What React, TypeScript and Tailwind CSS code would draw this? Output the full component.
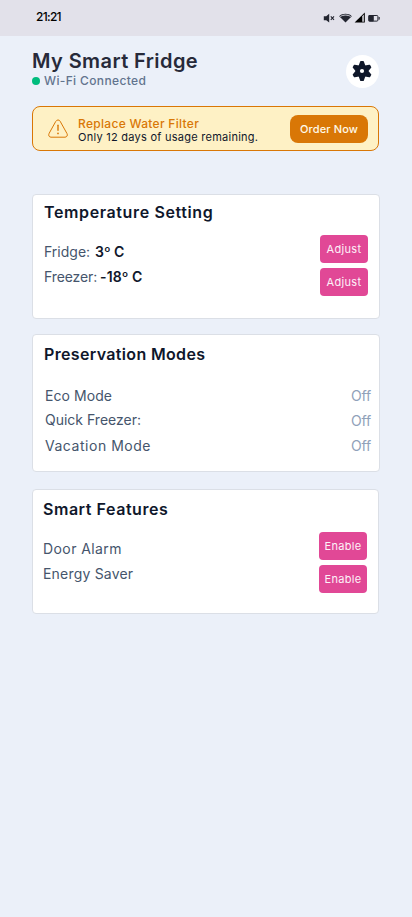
import type { ReactNode } from 'react';

interface CardProps {
    title: string;
    titleClass: string;
    className: string;
    children: ReactNode;
}

function Card({ title, titleClass, className, children }: CardProps) {
    return (
        <section className={`bg-white border border-[#dbdfe6] rounded ${className}`}>
            <h2 className={`text-base leading-6 font-semibold text-slate-900 ${titleClass}`}>{title}</h2>
            {children}
        </section>
    );
}

function ActionButton({ label }: { label: string }) {
    return (
        <button className="w-12 h-7 pt-0.5 rounded bg-[#e14896] text-[11px] tracking-[0.33px] text-pink-50 whitespace-nowrap">
            {label}
        </button>
    );
}

function StatusBar() {
    return (
        <header className="h-9 bg-[#e2e1ea] flex items-center justify-between pl-9 pr-8">
            <span className="text-[12px] leading-4 font-medium text-black -tracking-[0.7px] -mt-[3px]">21:21</span>
            <svg className="w-[58px] h-3" viewBox="0 0 58 12" fill="#232530">
                {/* muted speaker */}
                <path d="M1.8 4.200h2.4L7.2 1.800v8.800L4.2 8.200H1.8z" />
                <path d="M8.800 4.400l3.200 3.400M12 4.400L8.800 7.800" stroke="#232530" strokeWidth="1.1" />
                {/* wifi */}
                <path d="M17.2 4.2C20.2 1 26.8 1 29.8 4.2L23.5 10.6z" />
                <path d="M18.3 4.6c2.8-2 7.6-2 10.4 0" fill="none" stroke="#e2e1ea" strokeWidth="0.9" />
                {/* signal */}
                <path d="M42.8 0.6v10H32.6z" fill="#000" />
                <path d="M40.3 4.2l1.5-1.6v7.1h-1.5z" fill="#e2e1ea" />
                {/* battery */}
                <rect x="46.9" y="3.5" width="9" height="5.6" rx="1" fill="none" stroke="#232530" strokeWidth="1" />
                <rect x="46.4" y="3" width="5.4" height="6.6" rx="1" />
                <rect x="56.6" y="5" width="1.1" height="2.6" />
            </svg>
        </header>
    );
}

function GearIcon() {
    return (
        <svg className="w-5 h-5 mr-px -mt-px" viewBox="-10 -10 20 20" fill="#0f172a">
            <circle r="6.2" />
            <g stroke="#0f172a" strokeWidth="1.6" strokeLinejoin="round">
                <path d="M-1.1 -9.2H1.1L2.6 -5H-2.6z" />
                <path d="M-1.1 -9.2H1.1L2.6 -5H-2.6z" transform="rotate(60)" />
                <path d="M-1.1 -9.2H1.1L2.6 -5H-2.6z" transform="rotate(120)" />
                <path d="M-1.1 -9.2H1.1L2.6 -5H-2.6z" transform="rotate(180)" />
                <path d="M-1.1 -9.2H1.1L2.6 -5H-2.6z" transform="rotate(240)" />
                <path d="M-1.1 -9.2H1.1L2.6 -5H-2.6z" transform="rotate(300)" />
            </g>
            <circle r="2.1" fill="#fff" />
        </svg>
    );
}

function WarningIcon() {
    return (
        <svg className="w-[22px] h-5" viewBox="0 0 22 20" fill="none" stroke="#d97706" strokeLinecap="round" strokeLinejoin="round">
            <path d="M8.9 2.2c1-1.7 3.2-1.7 4.2 0l6.9 12.4c.9 1.7 0 3.5-2 3.6H4c-2-.1-2.9-1.9-2-3.6z" />
            <path d="M11 6.3v5" strokeWidth="1.4" />
            <path d="M11 14.3v.2" strokeWidth="1.7" />
        </svg>
    );
}

export default function App() {
    return (
        <div className="min-h-screen bg-[#ebf0f9] font-['Inter',sans-serif]">
            <StatusBar />

            <main className="pl-8 pr-8">
                <div className="flex justify-between pt-3 h-[70px]">
                    <div>
                        <h1 className="text-xl leading-[26px] font-semibold tracking-[0.42px] text-[#272a3a]">My Smart Fridge</h1>
                        <p className="flex items-center gap-1 text-xs leading-[14px] font-medium tracking-[0.36px] text-slate-500">
                            <span className="w-2 h-2 rounded-full bg-emerald-500" />
                            Wi-Fi Connected
                        </p>
                    </div>
                    <button className="w-[33px] h-[33px] mt-[7px] mr-px rounded-full bg-white flex items-center justify-center">
                        <GearIcon />
                    </button>
                </div>

                {/* Filter warning */}
                <div className="w-[347px] h-[45px] rounded-lg border border-[#d97706] bg-[#fef1c5] flex items-center pl-3.5 pr-2.5">
                    <WarningIcon />
                    <div className="ml-[9px] pt-[3px] flex-1 whitespace-nowrap">
                        <p className="h-[13px] text-xs leading-[14px] font-medium tracking-[0.3px] text-[#d97706]">Replace Water Filter</p>
                        <p className="h-3.5 text-[11px] leading-[14px] tracking-[0.26px] text-slate-900">Only 12 days of usage remaining.</p>
                    </div>
                    <button className="w-[78px] h-7 pt-0.5 rounded-lg bg-[#d97706] text-[11px] font-medium tracking-[0.15px] text-amber-50">
                        Order Now
                    </button>
                </div>

                <div className="mt-[43px] text-sm text-slate-600">
                    <Card title="Temperature Setting" titleClass="tracking-[0.62px]" className="h-[125px] pt-[5px] pl-[11px] pr-[11px]">
                        <div className="mt-[11px] flex justify-between">
                            <div className="pt-1 leading-[25px]">
                                <p>Fridge: <b className="ml-px font-semibold text-slate-900">3º C</b></p>
                                <p className="-tracking-[0.1px]">Freezer: <b className="-ml-px font-semibold tracking-[0.1px] text-slate-900">-18º C</b></p>
                            </div>
                            <div className="flex flex-col gap-[5px]">
                                <ActionButton label="Adjust" />
                                <ActionButton label="Adjust" />
                            </div>
                        </div>
                    </Card>

                    <Card title="Preservation Modes" titleClass="tracking-[0.34px]" className="mt-[15px] h-[138px] pt-[7px] pl-[11px] pr-2">
                        <div className="mt-[17px] pl-px flex justify-between leading-[25px]">
                            <div>
                                <p className="h-6 tracking-[0.06px]">Eco Mode</p>
                                <p className="h-[26px]">Quick Freezer:</p>
                                <p className="tracking-[0.53px]">Vacation Mode</p>
                            </div>
                            <div className="text-slate-400 -tracking-[0.15px]">
                                <p>Off</p>
                                <p>Off</p>
                                <p>Off</p>
                            </div>
                        </div>
                    </Card>

                    <Card title="Smart Features" titleClass="tracking-[0.54px]" className="mt-[17px] w-[347px] h-[125px] pt-[7px] pl-2.5 pr-[11px]">
                        <div className="mt-[11px] flex justify-between">
                            <div className="pt-1 leading-[25px]">
                                <p className="tracking-[0.42px]">Door Alarm</p>
                                <p className="tracking-[0.2px]">Energy Saver</p>
                            </div>
                            <div className="flex flex-col gap-[5px]">
                                <ActionButton label="Enable" />
                                <ActionButton label="Enable" />
                            </div>
                        </div>
                    </Card>
                </div>
            </main>
        </div>
    );
}
